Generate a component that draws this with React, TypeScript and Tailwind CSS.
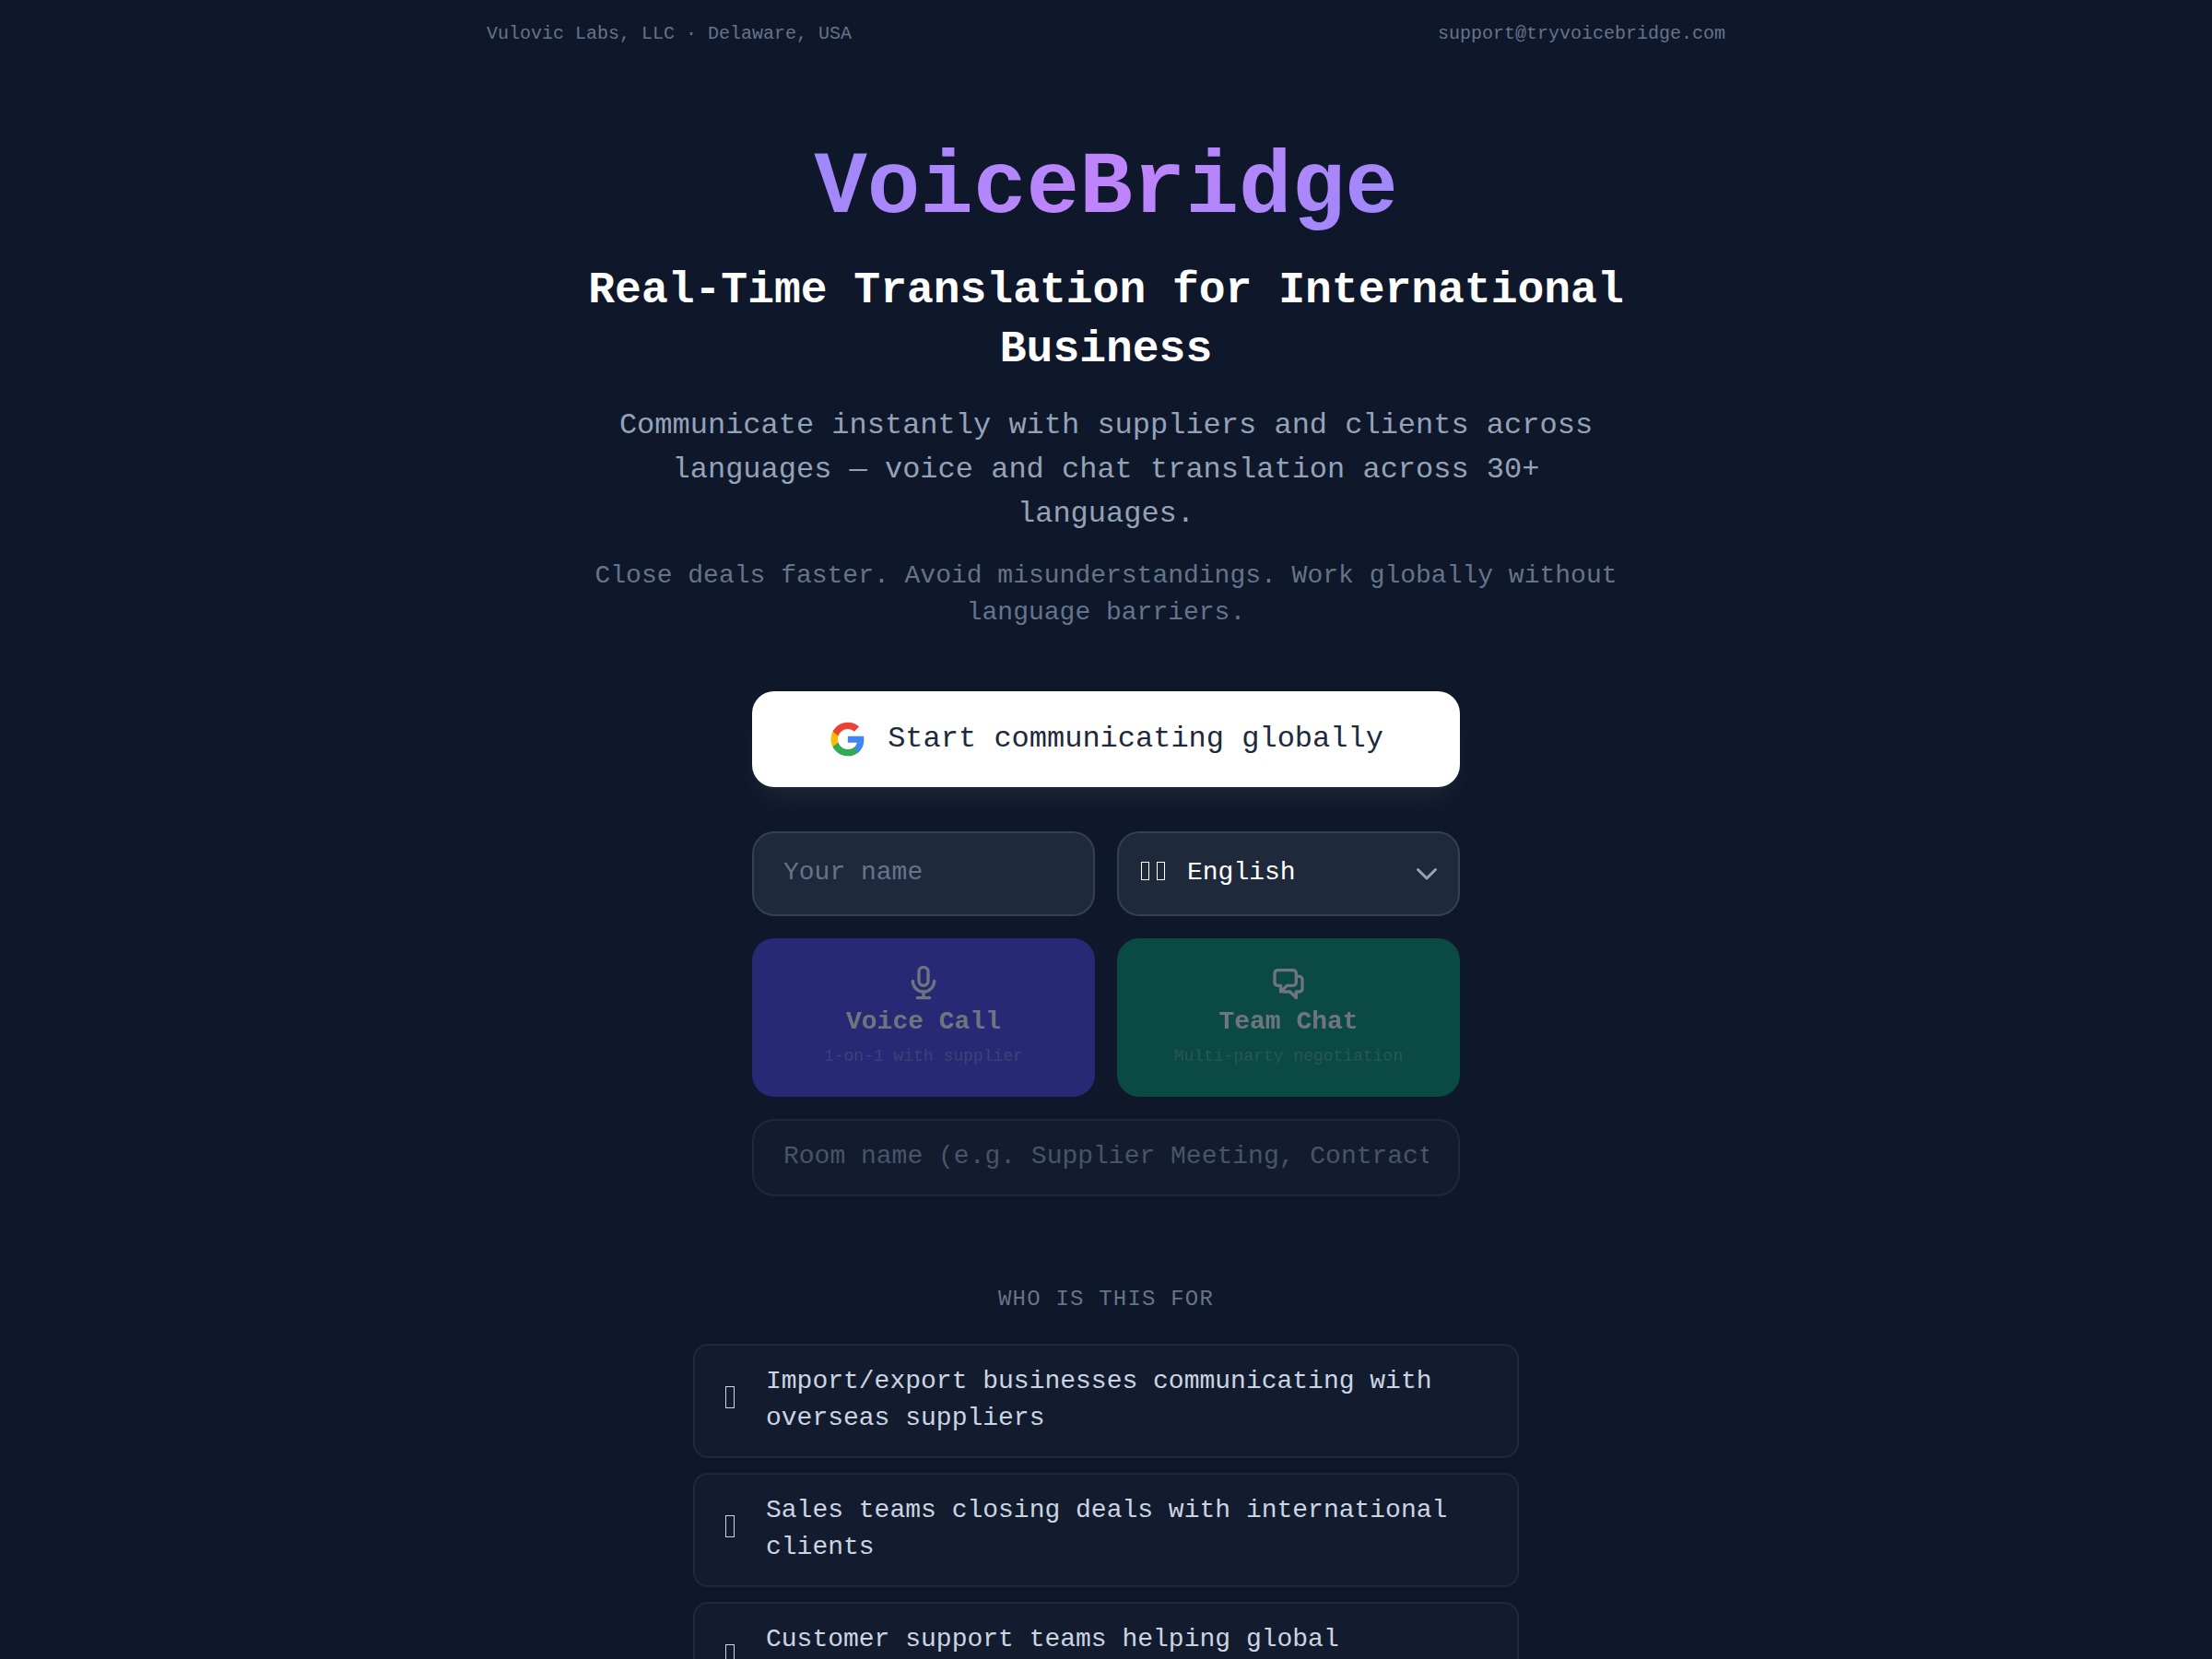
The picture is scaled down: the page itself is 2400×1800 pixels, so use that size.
import { useState } from 'react';

const LANGUAGES = [
    { code: 'en', label: 'English' },
    { code: 'es', label: 'Spanish' },
    { code: 'de', label: 'German' },
    { code: 'zh', label: 'Chinese' },
];

const AUDIENCES = [
    'Import/export businesses communicating with overseas suppliers',
    'Sales teams closing deals with international clients',
    'Customer support teams helping global customers',
];

function GoogleIcon() {
    return (
        <svg className="size-10" viewBox="-0.5 0 24 24" aria-hidden="true">
            <path fill="#4285F4" d="M22.56 12.25c0-.78-.07-1.53-.2-2.25H12v4.26h5.92c-.26 1.37-1.04 2.53-2.21 3.31v2.77h3.57c2.08-1.92 3.28-4.74 3.28-8.09z" />
            <path fill="#34A853" d="M12 23c2.97 0 5.46-.98 7.28-2.66l-3.57-2.77c-.98.66-2.23 1.06-3.71 1.06-2.86 0-5.29-1.93-6.16-4.53H2.18v2.84C3.99 20.53 7.7 23 12 23z" />
            <path fill="#FBBC05" d="M5.84 14.09c-.22-.66-.35-1.36-.35-2.09s.13-1.43.35-2.09V7.07H2.18C1.43 8.55 1 10.22 1 12s.43 3.45 1.18 4.93l2.85-2.22.81-.62z" />
            <path fill="#EA4335" d="M12 5.38c1.62 0 3.06.56 4.21 1.64l3.15-3.15C17.45 2.09 14.97 1 12 1 7.7 1 3.99 3.47 2.18 7.07l3.66 2.84c.87-2.6 3.3-4.53 6.16-4.53z" />
        </svg>
    );
}

function StrokeIcon({ d }: { d: string }) {
    return (
        <svg className="size-10" viewBox="0 0 24 24" fill="none" stroke="currentColor" strokeWidth={2} strokeLinecap="round" strokeLinejoin="round" aria-hidden="true">
            <path d={d} />
        </svg>
    );
}

const MIC_PATH = 'M19 11a7 7 0 01-7 7m0 0a7 7 0 01-7-7m7 7v4m0 0H8m4 0h4m-4-8a3 3 0 01-3-3V5a3 3 0 116 0v6a3 3 0 01-3 3z';
const CHAT_PATH = 'M17 8h2a2 2 0 012 2v6a2 2 0 01-2 2h-2v4l-4-4H9a1.994 1.994 0 01-1.414-.586m0 0L11 14h4a2 2 0 002-2V6a2 2 0 00-2-2H5a2 2 0 00-2 2v6a2 2 0 002 2h2v4l.586-.586z';

export default function App() {
    const [name, setName] = useState('');
    const [language, setLanguage] = useState('en');
    const [room, setRoom] = useState('');

    const canStart = name.trim().length > 0;

    return (
        <div className="min-h-screen bg-[#0f172a] font-['Liberation_Mono',monospace] text-white">
            <header className="mx-auto flex max-w-[1344px] items-center justify-between pt-5 text-xl leading-[34px] text-[#64748b]">
                <span>Vulovic Labs, LLC · Delaware, USA</span>
                <a href="mailto:support@tryvoicebridge.com">support@tryvoicebridge.com</a>
            </header>

            <main className="flex flex-col items-center pt-24 pb-16">
                <section className="w-full max-w-6xl text-center">
                    <h1 className="bg-[linear-gradient(135deg,#818cf8,#c084fc,#818cf8)] bg-clip-text text-8xl leading-[110px] font-bold text-transparent">
                        VoiceBridge
                    </h1>
                    <h2 className="mt-[23px] text-5xl leading-16 font-bold">
                        Real-Time Translation for International Business
                    </h2>
                    <p className="mt-[27px] text-[32px] leading-12 text-[#94a3b8]">
                        Communicate instantly with suppliers and clients across languages — voice and chat translation across 30+ languages.
                    </p>
                    <p className="mt-[23px] text-[28px] leading-10 text-[#64748b]">
                        Close deals faster. Avoid misunderstandings. Work globally without language barriers.
                    </p>
                </section>

                <section className="mt-[65px] flex w-full max-w-3xl flex-col">
                    <button
                        type="button"
                        className="flex h-26 items-center justify-center gap-6 rounded-3xl bg-white text-[32px] leading-12 text-[#1e293b] shadow-[0_20px_30px_-6px_rgba(255,255,255,0.05),0_8px_12px_-8px_rgba(255,255,255,0.05)]"
                    >
                        <GoogleIcon />
                        Start communicating globally
                    </button>

                    <div className="mt-12 grid grid-cols-2 gap-6 text-[28px]">
                        <input
                            type="text"
                            aria-label="Your name"
                            placeholder="Your name"
                            value={name}
                            onChange={(e) => setName(e.target.value)}
                            className="h-23 min-w-0 rounded-3xl border-2 border-[#334155] bg-[#1e293b] px-8 pb-1 placeholder:text-[#64748b]"
                        />
                        <div className="relative">
                            <select
                                aria-label="Your language"
                                value={language}
                                onChange={(e) => setLanguage(e.target.value)}
                                className="h-23 w-full appearance-none rounded-3xl border-2 border-[#334155] bg-[#1e293b] pr-6 pb-0.5 pl-[74px]"
                            >
                                {LANGUAGES.map((l) => (
                                    <option key={l.code} value={l.code}>
                                        {l.label}
                                    </option>
                                ))}
                            </select>
                            {/* flag slot */}
                            <span className="pointer-events-none absolute top-[33px] left-6.5 flex gap-2" aria-hidden="true">
                                <span className="h-5 w-[9px] border border-white" />
                                <span className="h-5 w-[9px] border border-white" />
                            </span>
                            <svg
                                className="pointer-events-none absolute top-1/2 right-4 size-10 -translate-y-1/2 text-[#94a3b8]"
                                viewBox="0 0 40 40"
                                fill="none"
                                stroke="currentColor"
                                strokeWidth={3}
                                strokeLinecap="round"
                                strokeLinejoin="round"
                                aria-hidden="true"
                            >
                                <path d="M10.5 15.5L20 25l9.5-9.5" />
                            </svg>
                        </div>

                        <button
                            type="button"
                            disabled={!canStart}
                            className="flex flex-col items-center rounded-3xl bg-[#4f46e5] pt-7 pb-7.5 disabled:opacity-40"
                        >
                            <StrokeIcon d={MIC_PATH} />
                            <span className="leading-[46px] font-bold">Voice Call</span>
                            <span className="text-lg leading-7 text-white/30">1-on-1 with supplier</span>
                        </button>
                        <button
                            type="button"
                            disabled={!canStart}
                            className="flex flex-col items-center rounded-3xl bg-[#059669] pt-7 pb-7.5 disabled:opacity-40"
                        >
                            <StrokeIcon d={CHAT_PATH} />
                            <span className="leading-[46px] font-bold">Team Chat</span>
                            <span className="text-lg leading-7 text-white/30">Multi-party negotiation</span>
                        </button>
                    </div>

                    <input
                        type="text"
                        aria-label="Room name"
                        placeholder="Room name (e.g. Supplier Meeting, Contract Review)"
                        value={room}
                        onChange={(e) => setRoom(e.target.value)}
                        className="mt-6 h-21 rounded-3xl border-2 border-[#1e293b] bg-[#1e293b]/30 px-8 pb-1 text-[28px] placeholder:text-[#475569]"
                    />
                </section>

                <section className="mt-24 w-full max-w-4xl">
                    <h3 className="text-center text-2xl leading-8 tracking-wider text-[#64748b] uppercase">
                        Who is this for
                    </h3>
                    <ul className="mt-8 flex flex-col gap-4">
                        {AUDIENCES.map((text) => (
                            <li
                                key={text}
                                className="flex items-center gap-6 rounded-2xl border-2 border-[#1e293b] bg-[#1e293b]/30 px-8 pt-[19px] pb-[21px] text-[28px] leading-10 text-[#cbd5e1]"
                            >
                                <span className="mb-1.5 flex w-[21px] shrink-0 pl-px" aria-hidden="true">
                                    <span className="h-6 w-2.5 border border-[#cbd5e1]" />
                                </span>
                                <span>{text}</span>
                            </li>
                        ))}
                    </ul>
                </section>
            </main>
        </div>
    );
}
